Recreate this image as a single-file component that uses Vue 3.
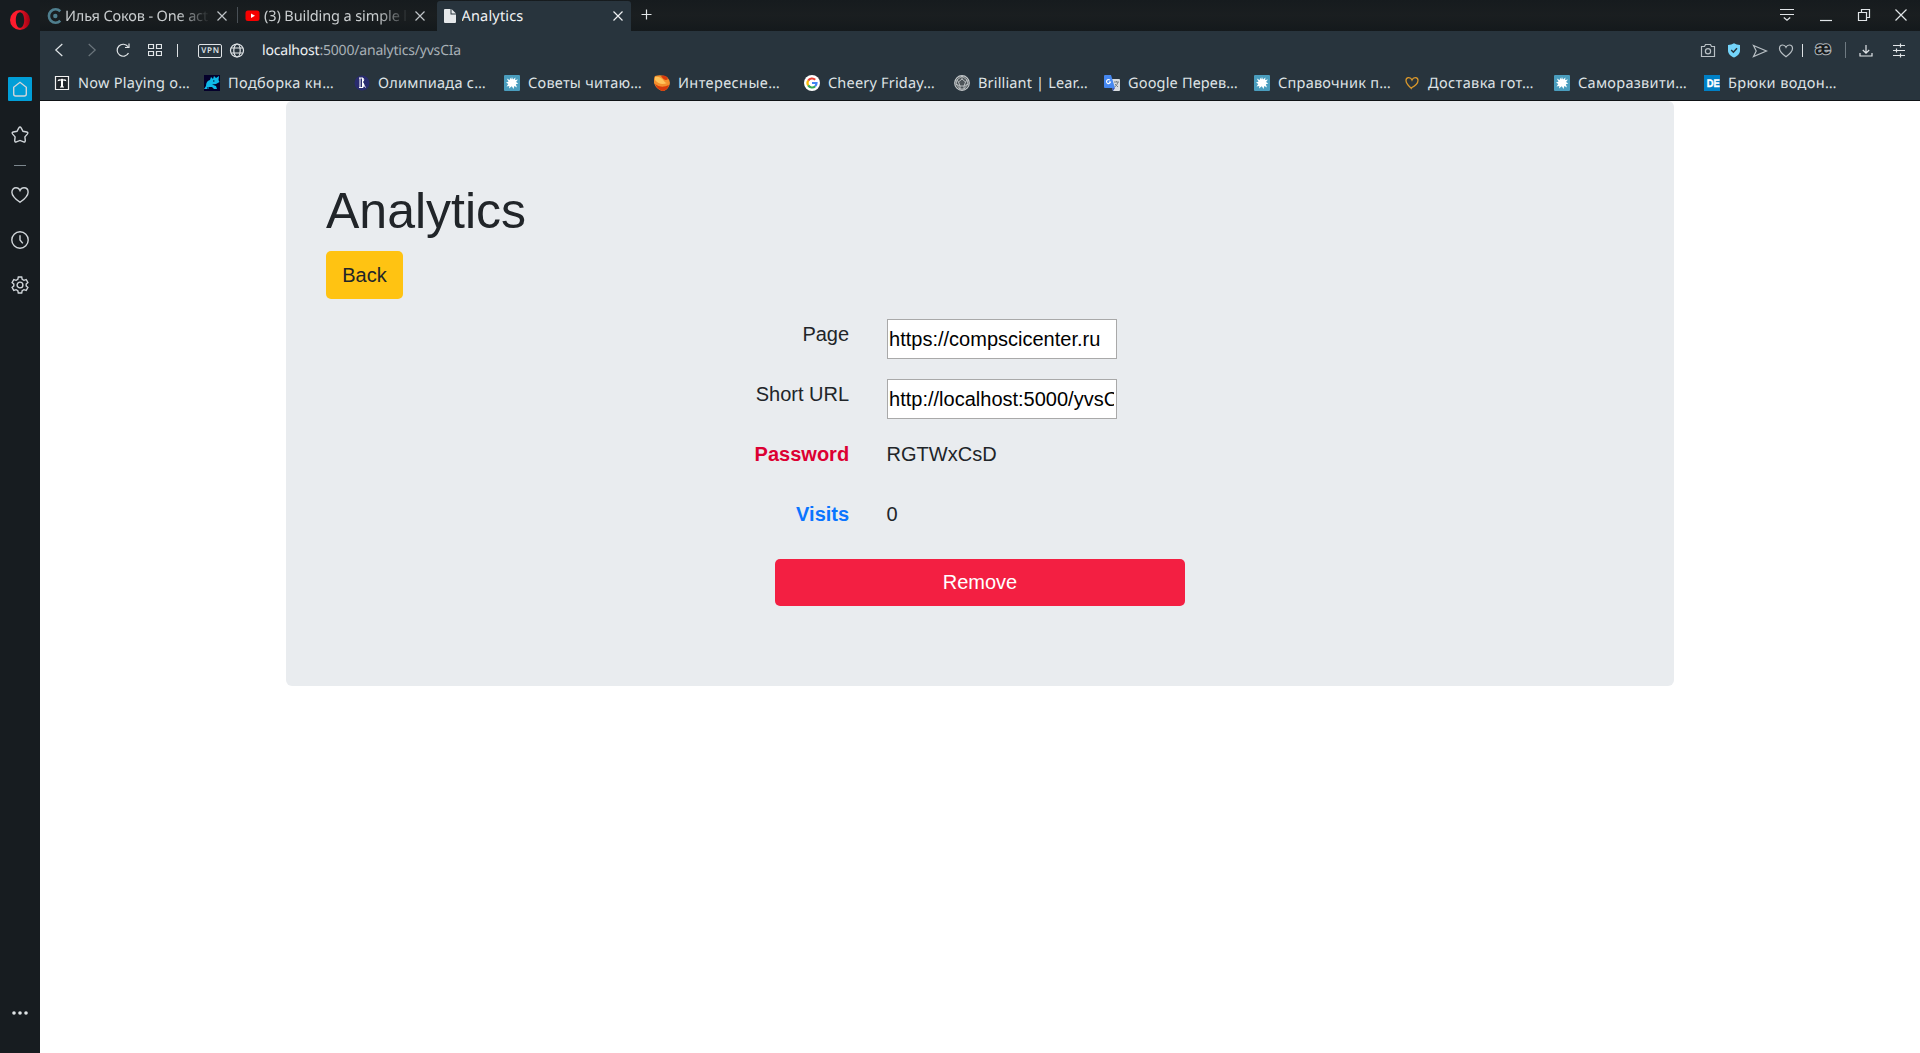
<script setup>
// Spreads a label over a given width so every tab and bookmark keeps its measure.
const vFit = {
  mounted(el, { value }) {
    const natural = el.getBoundingClientRect().width
    const count = el.textContent.length
    el.style.letterSpacing = `${(value - natural) / count}px`
  },
}

const bookmarks = [
  { icon: 'now', text: 'Now Playing o…', w: 112 },
  { icon: 'rhino', text: 'Подборка кн…', w: 106 },
  { icon: 'hse', text: 'Олимпиада с…', w: 108 },
  { icon: 'splat', text: 'Советы читаю…', w: 114 },
  { icon: 'ball', text: 'Интересные…', w: 102 },
  { icon: 'google', text: 'Cheery Friday…', w: 107 },
  { icon: 'brilliant', text: 'Brilliant | Lear…', w: 110 },
  { icon: 'translate', text: 'Google Перев…', w: 110 },
  { icon: 'splat', text: 'Справочник п…', w: 113 },
  { icon: 'heart', text: 'Доставка гот…', w: 106 },
  { icon: 'splat', text: 'Саморазвити…', w: 109 },
  { icon: 'de', text: 'Брюки водон…', w: 109 },
]

const rows = [
  { label: 'Page', value: 'https://compscicenter.ru', input: true },
  { label: 'Short URL', value: 'http://localhost:5000/yvsCIa', input: true },
  { label: 'Password', value: 'RGTWxCsD', tone: 'danger' },
  { label: 'Visits', value: '0', tone: 'primary' },
]
</script>

<template>
  <div class="window">
    <aside class="sidebar">
      <svg class="opera" width="20" height="20" viewBox="0 0 20 20">
        <defs>
          <linearGradient id="op" x1="0" x2="1"><stop offset=".35" stop-color="#ff1b2d" /><stop offset="1" stop-color="#a00012" /></linearGradient>
        </defs>
        <path fill="url(#op)" fill-rule="evenodd" d="M10 0a10 10 0 1 0 0 20a10 10 0 1 0 0-20zM10 2.2c2.600 0 4.200 3.600 4.200 7.800s-1.600 7.800-4.200 7.800S5.800 14.200 5.800 10S7.400 2.200 10 2.200z" />
      </svg>
      <div class="home">
        <svg width="24" height="24" viewBox="0 0 24 24" class="line"><path d="M5.700 10.300 L12 5.300 L18.300 10.300 V17 Q18.300 19 16.300 19 H7.700 Q5.700 19 5.700 17z" /></svg>
      </div>
      <svg class="line star" width="20" height="20" viewBox="0 0 20 20"><path d="M8.700 3.100Q10 1 11.300 3.100L13 6.300L16.800 7Q18.600 7.500 17.300 9.100L14.900 11.900L15.300 15.600Q15.300 17.500 13.600 16.900L10 15.400L6.400 16.900Q4.700 17.500 4.700 15.600L5.100 11.900L2.700 9.100Q1.400 7.500 3.200 7L7 6.300z" /></svg>
      <i class="rule"></i>
      <svg class="line fav" width="20" height="20" viewBox="0 0 20 20"><path d="M10 17.300C6 14.500 1.900 11 1.900 7.200C1.900 4.500 3.700 2.800 6 2.800C7.800 2.800 9.300 3.900 10 5.500C10.700 3.900 12.200 2.800 14 2.800C16.300 2.800 18.100 4.500 18.100 7.200C18.100 11 14 14.500 10 17.300z" /></svg>
      <svg class="line clock" width="20" height="20" viewBox="0 0 20 20"><circle cx="10" cy="10" r="8.200" /><path d="M10 5.200V10L12.800 13.400" /></svg>
      <svg class="line gear" width="20" height="20" viewBox="0 0 20 20"><path d="M8.300 2H11.700L12.200 4.300L13.900 5.300L16.200 4.600L17.900 7.500L16.200 9.100V10.900L17.900 12.500L16.200 15.400L13.900 14.700L12.200 15.700L11.700 18H8.300L7.800 15.700L6.100 14.700L3.800 15.400L2.100 12.500L3.800 10.900V9.100L2.100 7.500L3.800 4.600L6.100 5.300L7.800 4.300z" /><circle cx="10" cy="10" r="2.900" /></svg>
      <svg class="dots" width="18" height="6" viewBox="0 0 18 6"><g fill="#dfe3e5"><circle cx="3" cy="3" r="1.800" /><circle cx="9" cy="3" r="1.800" /><circle cx="15" cy="3" r="1.800" /></g></svg>
    </aside>

    <div class="browser">
      <header class="tabs">
        <div class="tab first">
          <svg width="16" height="16" viewBox="0 0 16 16"><path d="M13.300 3.200A6.700 6.700 0 1 0 13.300 12.800" fill="none" stroke="#4f7f8e" stroke-width="2.600" /><circle cx="8.300" cy="8" r="2.200" fill="#4f7f8e" /></svg>
          <div class="name fade"><span v-fit="143">Илья Соков - One act</span></div>
          <svg class="line close" width="12" height="12" viewBox="0 0 12 12"><path d="M1.500 1.500L10.500 10.500M10.500 1.500L1.500 10.500" /></svg>
        </div>
        <i class="tab-sep"></i>
        <div class="tab second">
          <svg width="15" height="16" viewBox="0 0 15 16"><rect x="0.500" y="2.500" width="14" height="10.500" rx="2.500" fill="#f60000" /><path d="M6 5.500L10 7.700L6 10z" fill="#fff" /></svg>
          <div class="name fade"><span v-fit="143">(3) Building a simple l</span></div>
          <svg class="line close" width="12" height="12" viewBox="0 0 12 12"><path d="M1.500 1.500L10.500 10.500M10.500 1.500L1.500 10.500" /></svg>
        </div>
        <div class="tab active">
          <svg width="12" height="14" viewBox="0 0 12 14"><path d="M1 0H6.500V5.500H12V13Q12 14 11 14H1Q0 14 0 13V1Q0 0 1 0z M7.500 0L12 4.500H7.500z" fill="#e6e9eb" /></svg>
          <div class="name"><span v-fit="62">Analytics</span></div>
          <svg class="line close" width="12" height="12" viewBox="0 0 12 12"><path d="M1.500 1.500L10.500 10.500M10.500 1.500L1.500 10.500" /></svg>
        </div>
        <svg class="line plus" width="12" height="12" viewBox="0 0 12 12"><path d="M5.500 .5V10.500M.5 5.500H10.500" /></svg>
        <div class="controls">
          <svg class="line" width="16" height="14" viewBox="0 0 16 14"><path d="M1 1.500H15M1 6.500H15M4.800 9.500L8 12.300L11.200 9.500" /></svg>
          <svg class="line" width="14" height="14" viewBox="0 0 14 14"><path d="M1 12.500H13" /></svg>
          <svg class="line" width="14" height="14" viewBox="0 0 14 14"><path d="M1.500 4.500H9.500V12.500H1.500zM4.500 4V1.500H12.500V9.500H10" /></svg>
          <svg class="line" width="14" height="14" viewBox="0 0 14 14"><path d="M1.500 1.500L12.500 12.500M12.500 1.500L1.500 12.500" /></svg>
        </div>
      </header>

      <div class="toolbar">
        <svg class="line" width="10" height="14" viewBox="0 0 10 14"><path d="M8.300 1L1.800 7L8.300 13" /></svg>
        <svg class="line dim" width="10" height="14" viewBox="0 0 10 14"><path d="M1.700 1L8.200 7L1.700 13" /></svg>
        <svg class="line" width="16" height="16" viewBox="0 0 16 16"><path d="M13.500 11A6 6 0 1 1 13 4.700M14 1.500V5.500H10" /></svg>
        <svg class="line" width="14" height="12" viewBox="0 0 14 12"><path d="M.5 .5H5.500V4.500H.5zM8.500 .5H13.500V4.500H8.500zM.5 7.500H5.500V11.500H.5zM8.500 7.500H13.500V11.500H8.500z" /></svg>
        <i class="bar"></i>
        <span class="vpn">VPN</span>
        <svg class="line" width="16" height="16" viewBox="0 0 16 16"><circle cx="8" cy="8.500" r="6.500" /><ellipse cx="8" cy="8.500" rx="3.200" ry="6.500" /><path d="M2.200 6H13.800M2.200 11H13.800" /></svg>
        <div class="url"><span v-fit="199"><b>localhost</b>:5000/analytics/yvsCIa</span></div>
        <svg class="line soft" width="16" height="16" viewBox="0 0 16 16"><path d="M1.500 4.500H4.500L5.500 2.500H10.500L11.500 4.500H14.500V14.500H1.500z" /><circle cx="8" cy="9.300" r="2.600" /></svg>
        <svg width="14" height="16" viewBox="0 0 14 16"><path d="M7 1.200Q9.500 2.900 13 2.900V8.400C13 11.900 10.500 13.900 7 15.400C3.500 13.900 1 11.900 1 8.400V2.900Q4.500 2.900 7 1.200z" fill="#74d5fb" /><path d="M4.200 8L6.400 10.200L10 6.300" fill="none" stroke="#28343d" stroke-width="1.500" /></svg>
        <svg class="line soft send" width="16" height="14" viewBox="0 0 16 14"><path d="M1.500 1.500L14.500 7L1.500 12.500L4.200 7z" /></svg>
        <svg class="line soft send" width="16" height="15" viewBox="0 0 16 15"><path d="M8 13.700C5 11.500 1.500 8.800 1.500 5.500C1.500 3.300 3 2 4.700 2C6.300 2 7.400 2.900 8 4.200C8.600 2.900 9.700 2 11.300 2C13 2 14.500 3.300 14.500 5.500C14.500 8.800 11 11.500 8 13.700z" /></svg>
        <i class="bar"></i>
        <span class="ae">æ</span>
        <i class="bar grey"></i>
        <svg class="line" width="16" height="16" viewBox="0 0 16 16"><path d="M2 11V14H14V11M8 3V11M4.800 8L8 11.200L11.200 8" /></svg>
        <svg class="line" width="14" height="16" viewBox="0 0 14 16"><path d="M1 3.500H13M1 8.500H13M1 13.500H13M8.500 1.500V5.500M4.500 6.500V10.500M8.500 11.500V15.500" /></svg>
      </div>

      <nav class="bookmarks">
        <div v-for="b in bookmarks" :key="b.text" class="bookmark">
          <svg width="16" height="16" viewBox="0 0 16 16">
            <g v-if="b.icon === 'now'"><path d="M1.500 1.500H14.500V14.500H1.500z" fill="#20262b" stroke="#f1f1f1" stroke-width="1.200" /><path d="M3.500 6.300Q4 3.500 6.500 4.500L8 3.500L9.500 4.500Q12 3.500 12.500 6.300L9 5.600V12H7V5.600zM6 11.500H10V12.500H6z" fill="#fff" /></g>
            <g v-else-if="b.icon === 'rhino'"><rect width="16" height="16" fill="#04002b" /><path d="M0 14L2 11Q2 6 6 5L7 2L9 4L10 1L12 3L15 1L14.500 5L15.500 7L12 9L8 9.500L12 11L13 14H10L8 12L5 12L5 14z" fill="#0eb9e9" /><path d="M9 6H10.500M3 13H5" stroke="#04002b" /></g>
            <g v-else-if="b.icon === 'hse'"><circle cx="8" cy="8" r="7.500" fill="#292b6e" /><path d="M6 3V12.500M8.500 3V12.500M5 3H9Q11 5 8.500 7Q11 9 9 12.500H5M8.500 8L11.500 12.500" fill="none" stroke="#fff" stroke-width="1" /></g>
            <g v-else-if="b.icon === 'splat'"><rect width="16" height="16" rx="1" fill="#4a9dbe" /><path d="M8 2L9 4.500L11.500 2.500L11 5L14 4.500L12 7L14.300 8.500L11.800 9.200L13 12.500L10.300 11L9.500 14L7.800 11.300L5 13.500L5.300 11L2.500 11.500L4.300 9L2 7.500L4.500 6.700L2.800 3.500L5.700 5L6.500 2.500L7.200 4.500z" fill="#fff" /></g>
            <g v-else-if="b.icon === 'ball'"><path d="M1 1Q7-1 13 2Q17 6 15.500 10Q13 16 8 16Q2 14 0 8Q-.5 3 1 1z" fill="#f4902c" /><path d="M7 1Q12-1 14 4Q11 7 7 1zM1 9Q7 14 15 10Q13 16 8 16Q3 14 1 9z" fill="#d83b0c" /><path d="M1 2Q6 1 10 6Q11 8 13 8Q6 11 1 5z" fill="#ffc35a" /></g>
            <g v-else-if="b.icon === 'google'" fill="none" stroke-width="2.200"><circle cx="8" cy="8" r="8" fill="#fff" /><path d="M11.200 4.800A4.500 4.500 0 0 0 4.200 5.600" stroke="#ea4335" /><path d="M4.200 5.600A4.500 4.500 0 0 0 4.200 10.400" stroke="#fbbc05" /><path d="M4.200 10.400A4.500 4.500 0 0 0 11.200 11.200" stroke="#34a853" /><path d="M11.200 11.200Q12.500 10 12.500 8H8" stroke="#4285f4" /></g>
            <g v-else-if="b.icon === 'brilliant'" fill="none" stroke="#c3c7c9"><circle cx="8" cy="8" r="7.300" fill="#4d5458" stroke-width="1.200" /><path d="M8 1L13 5L14 9L10 14H6L2 9L3 5zM8 4L11.500 7L10 11H6L4.500 7zM8 1V4M3 5L4.500 7M13 5L11.500 7M6 14V11M10 14V11M2 9L6 11M14 9L10 11" stroke-width=".9" /></g>
            <g v-else-if="b.icon === 'translate'"><path d="M6 4H15Q16 4 16 5V15Q16 16 15 16H9z" fill="#d8dce0" /><path d="M1 0H7L11 13H1Q0 13 0 12V1Q0 0 1 0z" fill="#4688f1" /><path d="M8 13H11L9 16z" fill="#3857bb" /><path d="M6 5.200A2 2 0 1 0 6.500 7H4.800" fill="none" stroke="#fff" stroke-width="1.100" /><path d="M10 7H15M12.500 6V7M14 7Q13 11 10.500 12M11 9L14 12" fill="none" stroke="#778087" /></g>
            <path v-else-if="b.icon === 'heart'" d="M8 14C4.500 11 2 8.500 2 5.500C2 2 6.500 1.500 8 5C9.500 1.500 14 2 14 5.500C14 8.500 11 11 7 13" fill="none" stroke="#d9972b" stroke-width="1.300" />
            <g v-else><rect width="16" height="16" fill="#0080c6" /><text x="2.700" y="12" font-family="Liberation Sans, sans-serif" font-size="11" font-weight="700" textLength="13" lengthAdjust="spacingAndGlyphs" fill="#fff" stroke="#fff" stroke-width=".4">DE</text></g>
          </svg>
          <span v-fit="b.w" class="bm-text">{{ b.text }}</span>
        </div>
      </nav>

      <main class="page">
        <section class="card">
          <h1>Analytics</h1>
          <button class="btn back">Back</button>
          <div class="rows">
            <div v-for="r in rows" :key="r.label" class="row">
              <div class="label" :class="r.tone">{{ r.label }}</div>
              <div class="value">
                <input v-if="r.input" :value="r.value" readonly />
                <template v-else>{{ r.value }}</template>
              </div>
            </div>
          </div>
          <div class="action"><button class="btn remove">Remove</button></div>
        </section>
      </main>
    </div>
  </div>
</template>

<style>
body { background: #fff; overflow: hidden; }
</style>

<style scoped>
* { box-sizing: border-box; }
.window { display: flex; width: 1920px; height: 1053px; font-family: "Noto Sans", "Open Sans", sans-serif; font-size: 14.500px; color: #dfe3e6; text-rendering: geometricPrecision; }
svg { display: block; flex: none; }
.line { fill: none; stroke: #e1e5e8; stroke-width: 1.2; }
.line.soft { stroke: #b9c0c5; }
.line.dim { stroke: #6b757c; }

.sidebar { width: 40px; flex: none; background: #171c20; display: flex; flex-direction: column; align-items: center; padding-top: 10px; }
.sidebar .line { stroke: #d0d5d9; stroke-width: 1.4; }
.home { width: 24px; height: 24px; margin-top: 47px; border-radius: 1px; background: #019ed7; }
.star { margin-top: 24px; }
.rule { width: 12px; height: 1px; margin-top: 20px; background: #7d878e; }
.fav, .clock, .gear { margin-right: 1px; }
.fav { margin-top: 19px; }
.clock { margin-top: 25px; }
.gear { margin-top: 25px; }
.dots { margin-top: auto; margin-bottom: 37px; }

.browser { flex: 1; min-width: 0; display: flex; flex-direction: column; }
.tabs { height: 31px; flex: none; display: flex; background: linear-gradient(#161b1e, #1a1e20 50%, #14191c); }
.tab { display: flex; align-items: center; height: 30px; margin-top: 1px; color: #c9cdcf; white-space: nowrap; }
.tab .name { overflow: hidden; line-height: 20px; }
.tab .name span, .url span, .bm-text { display: inline-block; white-space: nowrap; }
.first { width: 197px; padding-left: 7px; }
.first .name { width: 145px; margin: 0 6px 0 2px; }
.second { width: 199px; padding-left: 7px; }
.second .name { width: 145px; margin: 0 4.500px 0 4px; }
.fade { -webkit-mask-image: linear-gradient(90deg, #000 78%, transparent); mask-image: linear-gradient(90deg, #000 78%, transparent); }
.tab-sep { width: 1px; height: 16px; margin-top: 7px; background: #495056; }
.active { width: 194px; padding-left: 7px; background: #28343d; border-radius: 3px 3px 0 0; color: #f0f2f3; }
.active .name { width: 150px; margin-left: 5.500px; }
.tab .close { stroke: #bfc4c8; }
.active .close { stroke: #eef0f2; }
.plus { margin: 9px 0 0 10px; }
.controls { margin-left: auto; height: 30px; display: grid; grid-template-columns: 38px 40px 36px 38px; align-items: center; justify-items: center; padding-bottom: 1px; }

.toolbar { height: 39px; flex: none; background: #28343d; display: grid; align-items: center; justify-items: center; padding: 0 2px 1px 2px; grid-template-columns: 33px 33px 30px 34px 10px 40px 30px 1fr 26px 26px 26px 26px 7px 34px 11px 29px 38px; }
.bar { width: 1px; height: 13px; background: #dde1e4; }
.bar.grey { height: 16px; background: #6f7a82; }
.vpn { justify-self: end; width: 24px; height: 14px; margin-top: 1px; border: 1px solid #dfe3e6; border-radius: 2px; font: 600 8px/12px "Noto Sans", sans-serif; letter-spacing: .8px; text-align: center; text-indent: 1px; }
.send { margin-top: 1px; }
.url { justify-self: start; padding-left: 10px; margin-top: 1px; color: #a8b1b7; font-size: 14px; line-height: 20px; }
.url b { font-weight: 400; color: #eef1f3; }
.ae { font: 700 18px/16px "Liberation Sans", sans-serif; color: #15191c; -webkit-text-stroke: 2px #aeb4b8; paint-order: stroke fill; margin-top: -4px; }

.bookmarks { height: 31px; flex: none; display: flex; background: #28343d; border-bottom: 1px solid #0f1316; padding: 5px 0 0 14px; }
.bookmark { width: 150px; display: flex; gap: 8px; height: 16px; align-items: center; line-height: 20px; }

.page { flex: 1; background: #fff; padding-left: 246px; font: 20px/30px "Liberation Sans", Arial, sans-serif; color: #212529; text-rendering: auto; }
.card { width: 1388px; height: 585px; padding: 80px 40px; background: #e9ecef; border-radius: 6px; }
h1 { margin: 0 0 10px; font-size: 50px; line-height: 60px; font-weight: 400; }
.btn { display: block; height: 47.500px; padding: 0 16.250px; border: 0; border-radius: 5px; font: inherit; color: inherit; }
.back { background: #ffc312; }
.rows { margin: 20.500px -18.750px 0; }
.row { display: flex; height: 60px; }
.label { width: 560.600px; padding: 0 18.750px; text-align: right; }
.value { padding-left: 18.750px; }
.danger { color: #dc0032; font-weight: 700; }
.primary { color: #0a75ff; font-weight: 700; }
input { display: block; width: 230px; height: 40px; border: 1px solid #a9a9a9; padding: 0 2px 0 1.500px; background: #fff; color: #000; font: inherit; outline: 0; border-radius: 0; }
.action { display: flex; justify-content: center; }
.remove { width: 410px; height: 47px; padding-bottom: 1px; background: #f31f42; color: #fff; }
</style>
